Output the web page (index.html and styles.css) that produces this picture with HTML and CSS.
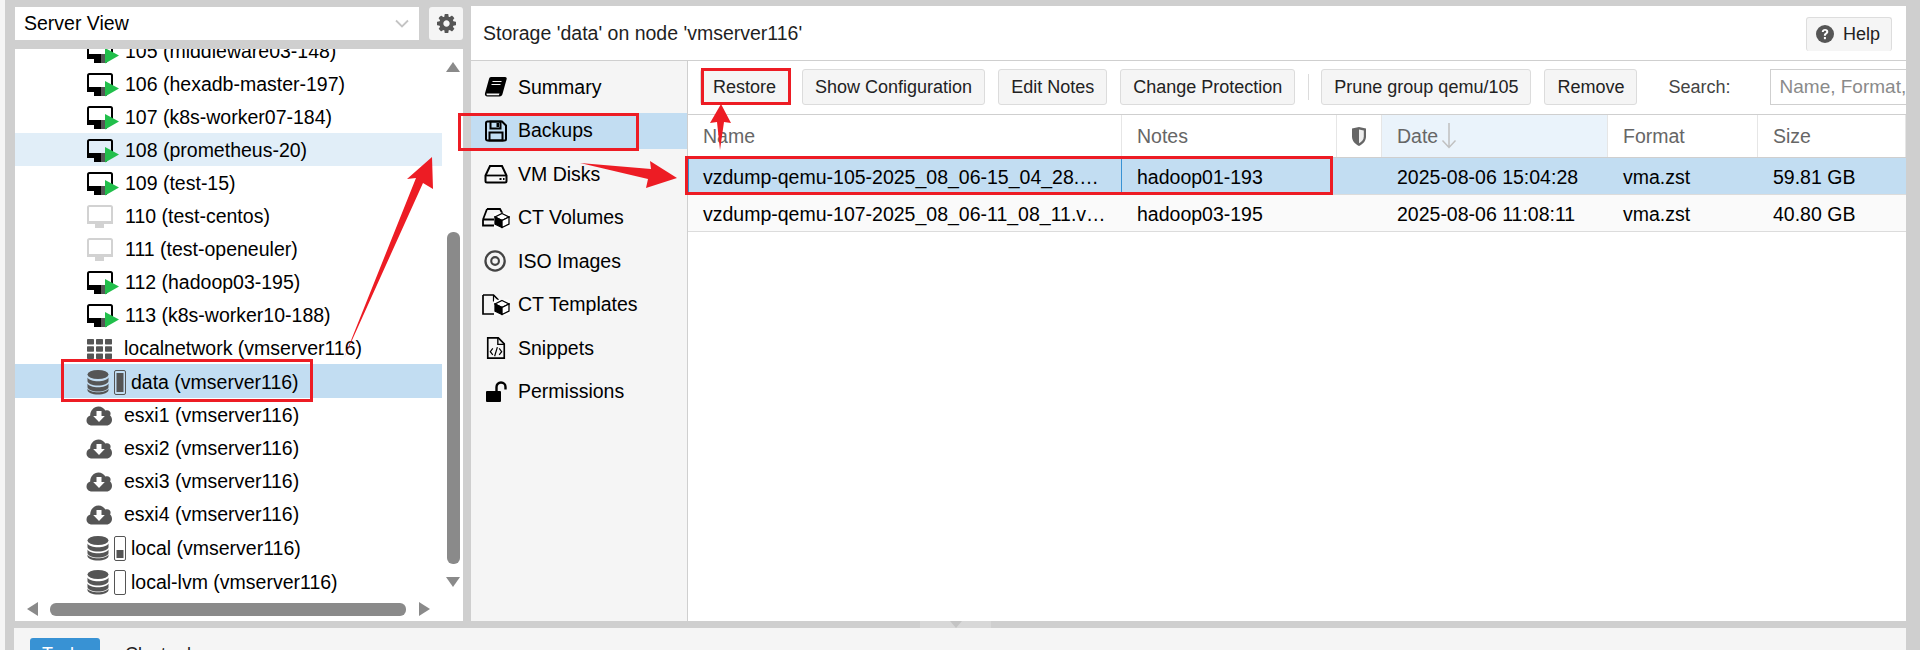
FILE: index.html
```html
<!DOCTYPE html>
<html lang="en">
<head>
<meta charset="utf-8">
<title>Storage data</title>
<link rel="stylesheet" href="styles.css">
</head>
<body>
<svg class="defs" width="0" height="0" aria-hidden="true">
  <symbol id="vm" viewBox="0 0 34 24">
    <rect x="2" y="1" width="24" height="17" rx="1.5" fill="none" stroke="#000" stroke-width="2"/>
    <rect x="1" y="14" width="26" height="5" fill="#000"/>
    <rect x="8" y="19" width="10" height="4" fill="#000"/>
    <rect x="15" y="14" width="6" height="9" fill="#555"/>
    <polygon points="19,8 33,15.5 19,23.500" fill="#21bf4b"/>
  </symbol>
  <symbol id="vmoff" viewBox="0 0 34 24">
    <rect x="2" y="1" width="24" height="17" rx="1.5" fill="#fff" stroke="#d2d2d2" stroke-width="2"/>
    <rect x="1" y="16" width="26" height="3" fill="#d2d2d2"/>
    <rect x="9" y="19" width="9" height="4" fill="#d2d2d2"/>
  </symbol>
  <symbol id="db" viewBox="0 0 24 26">
    <ellipse cx="12" cy="5.5" rx="10.5" ry="4.5" fill="#555"/>
    <path d="M1.500 8.500v3.500c0 2.500 4.700 4.500 10.500 4.500s10.500-2 10.500-4.500V8.500c-1.500 2.500-5.500 3.800-10.500 3.800S3 11 1.500 8.500z" fill="#555"/>
    <path d="M1.500 14.500v3.500c0 2.500 4.700 4.500 10.500 4.500s10.500-2 10.500-4.500v-3.500c-1.500 2.500-5.500 3.800-10.500 3.800S3 17 1.500 14.500z" fill="#555"/>
    <path d="M1.500 19.500v1.500c0 2.500 4.700 4.500 10.500 4.500s10.500-2 10.500-4.500v-1.500c-1.500 2.500-5.500 3.800-10.500 3.800S3 22 1.500 19.500z" fill="#555"/>
  </symbol>
  <symbol id="cloud" viewBox="0 0 26 20">
    <path d="M6 19.500C2.700 19.500.5 17.300.5 14.500c0-2.400 1.500-4.300 3.700-5C4.200 4.500 7.800.500 12.500.500c3.100 0 5.600 1.700 6.900 4.100 .6-.3 1.200-.4 1.800-.4 1.900 0 3.400 1.500 3.400 3.400 0 .7-.2 1.300-.5 1.800 1.100.9 1.900 2.600 1.900 4.300 0 3.100-2.300 5.800-5.500 5.800z" fill="#555"/>
    <polygon points="10.500,5 15.500,5 15.500,10 18.800,10 13,16 7.200,10 10.500,10" fill="#fff"/>
  </symbol>
  <symbol id="grid" viewBox="0 0 25 20">
    <g fill="#555">
      <rect x="0" y="0" width="7" height="5.500" rx=".7"/><rect x="9" y="0" width="7" height="5.500" rx=".7"/><rect x="18" y="0" width="7" height="5.500" rx=".7"/>
      <rect x="0" y="7.200" width="7" height="5.500" rx=".7"/><rect x="9" y="7.200" width="7" height="5.500" rx=".7"/><rect x="18" y="7.200" width="7" height="5.500" rx=".7"/>
      <rect x="0" y="14.500" width="7" height="5.500" rx=".7"/><rect x="9" y="14.500" width="7" height="5.500" rx=".7"/><rect x="18" y="14.500" width="7" height="5.500" rx=".7"/>
    </g>
  </symbol>
  <symbol id="cube" viewBox="0 0 16 16">
    <rect width="16" height="16" fill="#fff"/>
    <polygon points="8,1 15,4.500 8,8 1,4.500" fill="#fff" stroke="#000" stroke-width="1.300"/>
    <polygon points="1,4.500 8,8 8,15 1,11.500" fill="#000" stroke="#000" stroke-width="1.300"/>
    <polygon points="15,4.500 8,8 8,15 15,11.500" fill="#fff" stroke="#000" stroke-width="1.300"/>
  </symbol>
</svg>

<div class="app">
  <div class="edge"></div>
  <div class="workspace">
    <div class="main">
      <aside class="left">
        <div class="viewbar">
          <div class="combo">
            <span>Server View</span>
            <svg class="chev" viewBox="0 0 14 9"><path d="M1 1.500l6 6 6-6" fill="none" stroke="#c4c4c4" stroke-width="1.800"/></svg>
          </div>
          <button class="gear" type="button" aria-label="Settings">
            <svg viewBox="0 0 1536 1536"><path fill="#555" d="M1024 768q0-106-75-181t-181-75-181 75-75 181 75 181 181 75 181-75 75-181zm512-109v222q0 12-8 23t-20 13l-185 28q-19 54-39 91 35 50 107 138 10 12 10 25t-9 23q-27 37-99 108t-94 71q-12 0-26-9l-138-108q-44 23-91 38-16 136-29 186-7 28-36 28h-222q-14 0-24.500-8.500t-11.500-21.500l-28-184q-49-16-90-37l-141 107q-10 9-25 9-14 0-25-11-126-114-165-168-7-10-7-23 0-12 8-23 15-21 51-66.500t54-70.500q-27-50-41-99l-183-27q-13-2-21-12.500t-8-23.500v-222q0-12 8-23t19-13l186-28q14-46 39-92-40-57-107-138-10-12-10-24 0-10 9-23 26-36 98.500-107.500t94.500-71.500q13 0 26 10l138 107q44-23 91-38 16-136 29-186 7-28 36-28h222q14 0 24.500 8.500t11.500 21.500l28 184q49 16 90 37l142-107q9-9 24-9 13 0 25 10 129 119 165 170 7 8 7 22 0 12-8 23-15 21-51 66.500t-54 70.500q26 50 41 98l183 28q13 2 21 12.500t8 23.500z"/></svg>
          </button>
        </div>
        <div class="tree">
          <div class="tree-list">
            <div class="tree-rows">
              <div class="row"><svg class="ic vm"><use href="#vm"/></svg><span>105 (middleware03-148)</span></div>
              <div class="row"><svg class="ic vm"><use href="#vm"/></svg><span>106 (hexadb-master-197)</span></div>
              <div class="row"><svg class="ic vm"><use href="#vm"/></svg><span>107 (k8s-worker07-184)</span></div>
              <div class="row hover"><svg class="ic vm"><use href="#vm"/></svg><span>108 (prometheus-20)</span></div>
              <div class="row"><svg class="ic vm"><use href="#vm"/></svg><span>109 (test-15)</span></div>
              <div class="row"><svg class="ic vm"><use href="#vmoff"/></svg><span>110 (test-centos)</span></div>
              <div class="row"><svg class="ic vm"><use href="#vmoff"/></svg><span>111 (test-openeuler)</span></div>
              <div class="row"><svg class="ic vm"><use href="#vm"/></svg><span>112 (hadoop03-195)</span></div>
              <div class="row"><svg class="ic vm"><use href="#vm"/></svg><span>113 (k8s-worker10-188)</span></div>
              <div class="row"><svg class="ic small grid-ic"><use href="#grid"/></svg><span>localnetwork (vmserver116)</span></div>
              <div class="row tall selected">
                <svg class="ic store" viewBox="0 0 41 27"><use href="#db" width="24" height="26"/><rect x="28.500" y="1.500" width="11" height="24" rx="1.500" fill="none" stroke="#555"/><rect x="30.500" y="4" width="7" height="19" fill="#555"/></svg>
                <span>data (vmserver116)</span>
              </div>
              <div class="row"><svg class="ic small cloud-ic"><use href="#cloud"/></svg><span>esxi1 (vmserver116)</span></div>
              <div class="row"><svg class="ic small cloud-ic"><use href="#cloud"/></svg><span>esxi2 (vmserver116)</span></div>
              <div class="row"><svg class="ic small cloud-ic"><use href="#cloud"/></svg><span>esxi3 (vmserver116)</span></div>
              <div class="row"><svg class="ic small cloud-ic"><use href="#cloud"/></svg><span>esxi4 (vmserver116)</span></div>
              <div class="row tall">
                <svg class="ic store" viewBox="0 0 41 27"><use href="#db" width="24" height="26"/><rect x="28.500" y="1.500" width="11" height="24" rx="1.500" fill="none" stroke="#555"/><rect x="30.500" y="15" width="7" height="8" fill="#555"/></svg>
                <span>local (vmserver116)</span>
              </div>
              <div class="row tall">
                <svg class="ic store" viewBox="0 0 41 27"><use href="#db" width="24" height="26"/><rect x="28.500" y="1.500" width="11" height="24" rx="1.500" fill="none" stroke="#555"/></svg>
                <span>local-lvm (vmserver116)</span>
              </div>
            </div>
          </div>
          <div class="vscroll">
            <svg class="arr" viewBox="0 0 14 10"><polygon points="7,0 14,10 0,10" fill="#8a8a8a"/></svg>
            <div class="vthumb"></div>
            <svg class="arr" viewBox="0 0 14 10"><polygon points="0,0 14,0 7,10" fill="#8a8a8a"/></svg>
          </div>
          <div class="hscroll">
            <svg class="arrh" viewBox="0 0 11 14"><polygon points="11,0 11,14 0,7" fill="#8a8a8a"/></svg>
            <div class="hthumb"></div>
            <svg class="arrh" viewBox="0 0 11 14"><polygon points="0,0 11,7 0,14" fill="#8a8a8a"/></svg>
          </div>
        </div>
      </aside>

      <section class="panel">
        <header class="panel-head">
          <h1>Storage 'data' on node 'vmserver116'</h1>
          <button class="help" type="button">
            <svg viewBox="0 0 18 18"><circle cx="9" cy="9" r="9" fill="#555"/><path d="M5.800 7c0-1.900 1.400-3 3.300-3s3.200 1.100 3.200 2.700c0 2.300-2.400 2.200-2.400 4H7.900c0-2.700 2.300-2.600 2.300-3.900 0-.6-.5-1-1.200-1-.8 0-1.200.5-1.300 1.300z" fill="#fff"/><rect x="7.900" y="12" width="2" height="2.200" fill="#fff"/></svg>
            <span>Help</span>
          </button>
        </header>
        <div class="panel-body">
          <nav class="nav">
            <a class="nav-item"><svg class="nav-ic" viewBox="0 0 26 22"><path d="M8 1h14c1.500 0 2 1 1.600 2.200L19.500 18c-.4 1.500-1.300 2.500-3 2.500H4.500C2.500 20.500 1.500 19 2 17.200L6 3C6.300 1.800 7 1 8 1z" fill="#000"/><path d="M3.500 17.500h13l-.6 1.800H3.800z" fill="#f5f5f5"/><path d="M9.500 5.500h9M8.500 8.500h9" stroke="#f5f5f5" stroke-width="1.200"/></svg><span>Summary</span></a>
            <a class="nav-item active"><svg class="nav-ic" viewBox="0 0 26 22"><path d="M4 1.500h15l4 4v13.500c0 .8-.7 1.500-1.500 1.500h-17c-.8 0-1.500-.7-1.500-1.500v-16c0-.8.7-1.500 1.500-1.500z" fill="none" stroke="#000" stroke-width="2"/><rect x="7.500" y="1.500" width="10" height="7" fill="none" stroke="#000" stroke-width="2"/><rect x="13.500" y="3" width="2.500" height="4" fill="#000"/><rect x="6.500" y="12.500" width="13" height="8" fill="none" stroke="#000" stroke-width="2"/></svg><span>Backups</span></a>
            <a class="nav-item"><svg class="nav-ic" viewBox="0 0 26 22"><path d="M7 3h12l4.500 9.500v5.500c0 .9-.6 1.500-1.500 1.500H4c-.9 0-1.500-.6-1.500-1.500v-5.500z" fill="none" stroke="#000" stroke-width="2"/><path d="M2.500 12.500h21" stroke="#000" stroke-width="1.800"/><path d="M16.500 16h2M20 16h1.500" stroke="#000" stroke-width="1.800"/></svg><span>VM Disks</span></a>
            <a class="nav-item"><svg class="nav-ic wide" viewBox="0 0 28 22"><path d="M5 2h13l3.500 6.500M1 12.500L5 2M1 12.500h12M1 12.500v6h13" fill="none" stroke="#000" stroke-width="1.800"/><use href="#cube" x="12" y="5.500" width="16" height="16"/></svg><span>CT Volumes</span></a>
            <a class="nav-item"><svg class="nav-ic wide" viewBox="0 0 28 24"><circle cx="13" cy="12" r="10.500" fill="none" stroke="#444" stroke-width="2.500"/><circle cx="13" cy="12" r="4.200" fill="none" stroke="#444" stroke-width="2.300"/></svg><span>ISO Images</span></a>
            <a class="nav-item"><svg class="nav-ic wide" viewBox="0 0 28 22"><path d="M1 1h10.500l5 5M1 1v19h11" fill="none" stroke="#000" stroke-width="1.700"/><path d="M11.500 1v6h5" fill="none" stroke="#000" stroke-width="1.200"/><use href="#cube" x="12" y="5.500" width="16" height="16"/></svg><span>CT Templates</span></a>
            <a class="nav-item"><svg class="nav-ic" viewBox="0 0 26 24"><path d="M4 1h11.500L22 7.500V23H4z" fill="none" stroke="#000" stroke-width="1.800"/><path d="M15 1v7h7" fill="none" stroke="#000" stroke-width="1.500"/><path d="M9.500 12.500L6.800 16l2.700 3.500M16.500 12.500l2.700 3.500-2.700 3.500M14.500 11l-3 10" fill="none" stroke="#000" stroke-width="1.300"/></svg><span>Snippets</span></a>
            <a class="nav-item"><svg class="nav-ic" viewBox="0 0 26 22"><rect x="3" y="10" width="15" height="11" rx="1" fill="#000"/><path d="M13.500 10V6c0-2.500 1.800-4.500 4.500-4.500s4.500 2 4.500 4.500v2.500" fill="none" stroke="#000" stroke-width="2.400"/></svg><span>Permissions</span></a>
          </nav>
          <div class="content">
            <div class="toolbar">
              <button class="btn" type="button">Restore</button>
              <button class="btn" type="button">Show Configuration</button>
              <button class="btn" type="button">Edit Notes</button>
              <button class="btn" type="button">Change Protection</button>
              <span class="sep"></span>
              <button class="btn" type="button">Prune group qemu/105</button>
              <button class="btn" type="button">Remove</button>
              <label class="search-label" for="search">Search:</label>
              <input class="search" id="search" type="text" placeholder="Name, Format, Notes">
            </div>
            <div class="table">
              <div class="thead grid-row">
                <div class="th">Name</div>
                <div class="th">Notes</div>
                <div class="th shield"><svg viewBox="0 0 14 19"><path d="M0 1.500L7 0l7 1.500v8c0 4.500-3 7.500-7 9.500-4-2-7-5-7-9.500z" fill="#666"/><path d="M7 2.500l4.800 1v6c0 3.200-2 5.300-4.800 6.800z" fill="#eee"/></svg></div>
                <div class="th sorted">Date<svg class="sort" viewBox="0 0 16 26"><path d="M8 0v24M1.500 17.500L8 24.500l6.500-7" fill="none" stroke="#c0c0c0" stroke-width="1.500"/></svg></div>
                <div class="th">Format</div>
                <div class="th">Size</div>
              </div>
              <div class="tr grid-row selected">
                <div class="td focus">vzdump-qemu-105-2025_08_06-15_04_28.vma.zst</div>
                <div class="td">hadoop01-193</div>
                <div class="td"></div>
                <div class="td">2025-08-06 15:04:28</div>
                <div class="td">vma.zst</div>
                <div class="td">59.81 GB</div>
              </div>
              <div class="tr grid-row alt">
                <div class="td">vzdump-qemu-107-2025_08_06-11_08_11.vma.zst</div>
                <div class="td">hadoop03-195</div>
                <div class="td"></div>
                <div class="td">2025-08-06 11:08:11</div>
                <div class="td">vma.zst</div>
                <div class="td">40.80 GB</div>
              </div>
            </div>
          </div>
        </div>
      </section>
    </div>

    <div class="splitter"><span class="handle"><svg viewBox="0 0 12 7"><polygon points="0,0 12,0 6,7" fill="#c4c4c4"/></svg></span></div>

    <div class="log">
      <span class="tab active-tab">Tasks</span>
      <span class="tab">Cluster log</span>
    </div>
  </div>
</div>

<svg class="marks" viewBox="0 0 1920 650" aria-hidden="true">
  <g fill="none" stroke="#ed1c24" stroke-width="3">
    <rect x="62.500" y="360.500" width="249" height="40"/>
    <rect x="459.500" y="114.500" width="178" height="35"/>
    <rect x="686.500" y="157.500" width="645" height="36"/>
    <rect x="702.500" y="69.500" width="87" height="34"/>
  </g>
  <g fill="#ed1c24">
    <polygon points="344,358 416,178 407,179 432,157 433,189 423,183"/>
    <polygon points="580,163 651,169 650,161 677,178 646,188 648,179"/>
    <polygon points="721,104 731,123 724,122 720,150 717,122 710,123"/>
  </g>
</svg>
</body>
</html>
```

FILE: styles.css
```css
* { box-sizing: border-box; }
html, body { margin: 0; height: 650px; overflow: hidden; }
body {
  position: relative;
  background: #cfcfcf;
  color: #000;
  font-family: "Liberation Sans", Arial, sans-serif;
  font-size: 19.5px;
}
.defs { position: absolute; }
button { font-family: inherit; }

.app { display: flex; height: 650px; }
.edge { flex: none; width: 5px; background: #f5f5f5; }
.workspace { flex: 1; min-width: 0; display: flex; flex-direction: column; }

.main { flex: none; height: 621px; display: flex; padding: 6px 14px 0 10px; gap: 8px; }

/* left column */
.left { flex: none; width: 448px; display: flex; flex-direction: column; }
.viewbar { flex: none; height: 43px; padding-top: 1px; display: flex; gap: 10px; align-items: flex-start; }
.combo {
  flex: 1;
  height: 33px;
  background: #fff;
  display: flex;
  align-items: center;
  justify-content: space-between;
  padding: 0 10px 0 9px;
}
.chev { width: 14px; height: 9px; }
.gear {
  flex: none;
  width: 34px;
  height: 33px;
  margin: 0;
  padding: 0;
  border: 0;
  border-radius: 3px;
  background: #f5f5f5;
  display: flex;
  align-items: center;
  justify-content: center;
}
.gear svg { width: 19px; height: 19px; }

.tree {
  flex: 1;
  min-height: 0;
  display: grid;
  grid-template-columns: 1fr 21px;
  grid-template-rows: 549px 22px;
  background: #fff;
}
.tree-list { overflow: hidden; }
.tree-rows { margin-top: -15px; }
.row { height: 33px; display: flex; align-items: center; padding: 2px 0 0 71px; white-space: nowrap; }
.row.tall { height: 34px; }
.row.hover { background: #e1eef8; }
.row.selected { background: #c2ddf2; }
.ic { flex: none; }
.ic.vm { width: 34px; height: 24px; margin-right: 5px; }
.ic.small { margin-right: 12px; }
.ic.grid-ic { width: 25px; height: 20px; margin-left: 1px; }
.ic.cloud-ic { width: 26px; height: 20px; }
.ic.store { width: 41px; height: 27px; margin-right: 4px; }

.vscroll { display: flex; flex-direction: column; align-items: center; padding-top: 13px; }
.arr { width: 14px; height: 10px; flex: none; margin-left: 1px; }
.vthumb { flex: none; width: 13px; height: 332px; margin: 160px 0 13px 1px; border-radius: 6px; background: #8a8a8a; }
.hscroll { display: flex; align-items: center; padding-left: 12px; grid-column: 1 / 2; }
.arrh { width: 11px; height: 14px; flex: none; }
.hthumb { flex: none; width: 356px; height: 13px; border-radius: 6px; background: #8a8a8a; margin: 0 13px 0 12px; }

/* right panel */
.panel { flex: 1; min-width: 0; display: flex; flex-direction: column; background: #fff; }
.panel-head {
  flex: none;
  height: 55px;
  border-bottom: 1px solid #cfcfcf;
  display: flex;
  align-items: center;
  justify-content: space-between;
  padding: 0 14px 0 12px;
}
.panel-head h1 { margin: 0; font-size: 19.5px; font-weight: 400; color: #1f1f1f; }
.help {
  height: 34px;
  width: 86px;
  margin: 1px 0 0;
  padding: 0 0 0 9px;
  border: 1px solid #ddd;
  border-bottom: 0;
  border-radius: 3px;
  background: #f5f5f5;
  display: flex;
  align-items: center;
  gap: 9px;
  font-size: 18px;
  color: #222;
}
.help svg { width: 18px; height: 18px; }
.panel-body { flex: 1; min-height: 0; display: flex; }

.nav {
  flex: none;
  width: 217px;
  background: #f5f5f5;
  border-right: 1px solid #cfcfcf;
  padding-top: 8px;
}
.nav-item {
  height: 36px;
  margin-bottom: 7.5px;
  display: flex;
  align-items: center;
  padding-left: 12px;
  color: #000;
}
.nav-item.active { background: #c2ddf2; }
.nav-ic { flex: none; width: 26px; height: 22px; margin-right: 9px; margin-left: 0; }
.nav-ic.wide { width: 28px; margin-left: -1px; margin-right: 8px; }

.content { flex: 1; min-width: 0; display: flex; flex-direction: column; }
.toolbar {
  flex: none;
  height: 54px;
  display: flex;
  align-items: flex-start;
  padding: 8px 0 0 12px;
  gap: 13px;
  overflow: hidden;
  border-bottom: 1px solid #cfcfcf;
}
.btn {
  flex: none;
  height: 36px;
  margin: 0;
  padding: 0 12px;
  border: 1px solid #dcdcdc;
  border-radius: 3px;
  background: #f5f5f5;
  font-size: 18px;
  color: #222;
  white-space: nowrap;
}
.sep { flex: none; width: 1px; height: 26px; margin: 5px -1px 0 0; background: #dcdcdc; }
.search-label { flex: none; height: 36px; line-height: 36px; margin-left: 18px; font-size: 18px; color: #444; }
.search {
  flex: none;
  width: 220px;
  height: 36px;
  margin: 0 0 0 26px;
  padding: 0 8px 0 9px;
  border: 1px solid #cfcfcf;
  background: #fff;
  font-family: inherit;
  font-size: 19px;
  outline: 0;
}
.search::placeholder { color: #8a8a8a; opacity: 1; }

.table { flex: 1; overflow: hidden; }
.grid-row { display: grid; grid-template-columns: 434px 215px 45px 226px 150px 1fr; }
.thead { height: 43px; border-bottom: 1px solid #cfcfcf; }
.th {
  display: flex;
  align-items: center;
  gap: 3px;
  padding-left: 15px;
  color: #666;
  border-right: 1px solid #e6e6e6;
}
.th.shield { padding-left: 15px; }
.th.shield svg { width: 14px; height: 19px; }
.th.sorted { background: #eaf3fb; }
.sort { width: 16px; height: 26px; }
.tr { height: 37px; border-bottom: 1px solid #dcdcdc; }
.tr.selected { background: #c2ddf2; }
.tr.alt { background: #fafafa; }
.td {
  padding: 3px 15px 0;
  line-height: 33px;
  white-space: nowrap;
  overflow: hidden;
  text-overflow: ellipsis;
}
.td.focus { outline: 1px solid #3892d4; outline-offset: -1px; }

/* splitter and bottom */
.splitter { flex: none; height: 7px; display: flex; justify-content: center; padding-right: 14px; }
.handle { width: 71px; height: 7px; background: #d8d8d8; display: flex; align-items: center; justify-content: center; }
.handle svg { width: 12px; height: 7px; }
.log {
  flex: 1;
  margin: 0 14px 0 9px;
  background: #f5f5f5;
  overflow: hidden;
  display: flex;
  padding: 10px 0 0 16px;
  gap: 25px;
}
.tab { flex: none; height: 34px; line-height: 33px; font-size: 18px; color: #222; }
.tab.active-tab { width: 70px; text-align: center; background: #3892d4; color: #fff; border-radius: 3px 3px 0 0; }

.marks { position: absolute; left: 0; top: 0; width: 1920px; height: 650px; pointer-events: none; }
```
